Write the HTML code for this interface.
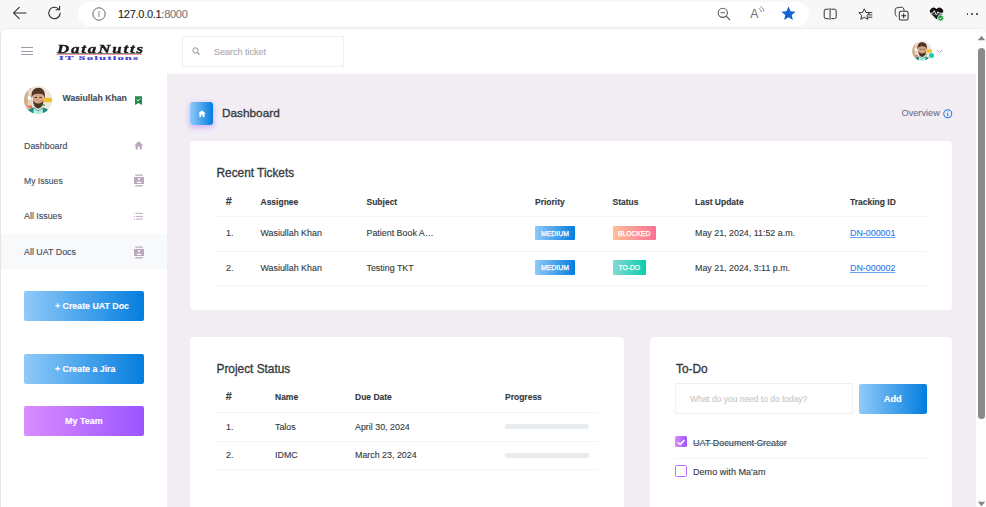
<!DOCTYPE html>
<html><head><meta charset="utf-8"><title>Dashboard</title>
<style>
html,body{margin:0;padding:0;width:986px;height:507px;overflow:hidden;background:#f7f7f7;font-family:"Liberation Sans",sans-serif;}
.t{position:absolute;white-space:nowrap;-webkit-text-stroke:0.12px currentColor;}
.b{position:absolute;}
svg.b{overflow:visible;}
</style></head><body>
<div class="b" style="left:0px;top:0px;width:986px;height:29px;background:#f7f7f7;"></div>
<div class="b" style="left:77.5px;top:2px;width:731px;height:24px;background:#fff;border-radius:12px;"></div>
<svg class="b" style="left:11px;top:5.2px" width="18" height="16" viewBox="0 0 18 16"><path d="M2.5 8H15M2.5 8L8.2 2.3M2.5 8L8.2 13.7" stroke="#262626" stroke-width="1.05" fill="none" stroke-linecap="round" stroke-linejoin="round"/></svg>
<svg class="b" style="left:46.3px;top:4.4px" width="18" height="18" viewBox="0 0 18 18"><path d="M14.2 9a5.7 5.7 0 1 1-1.8-4.2" stroke="#262626" stroke-width="1.05" fill="none" stroke-linecap="round"/><path d="M13.6 2.2v3.6h-3.6" stroke="#262626" stroke-width="1.05" fill="none" stroke-linecap="round" stroke-linejoin="round"/></svg>
<svg class="b" style="left:91.5px;top:6.5px" width="14" height="14" viewBox="0 0 14 14"><circle cx="7" cy="7" r="6.2" stroke="#555" stroke-width="0.9" fill="none"/><path d="M7 4v6" stroke="#666" stroke-width="0.8"/></svg>
<div class="t" style="left:118px;top:5.8px;font-size:11px;line-height:16px;color:#1f1f1f;letter-spacing:-0.28px;">127.0.0.1<span style="color:#777">:8000</span></div>
<svg class="b" style="left:716px;top:6px" width="16" height="16" viewBox="0 0 16 16"><circle cx="6.8" cy="6.8" r="4.6" stroke="#5a5a5a" stroke-width="1.1" fill="none"/><path d="M10.2 10.2L14 14M4.6 6.8h4.4" stroke="#5a5a5a" stroke-width="1.1"/></svg>
<div class="t" style="left:750.3px;top:5.6px;font-size:12.3px;line-height:16px;color:#707070;font-weight:normal;-webkit-text-stroke:0">A</div>
<svg class="b" style="left:757.5px;top:6.3px" width="7" height="7" viewBox="0 0 7 7"><path d="M0.8 2.6c1.5 0.6 2.4 1.8 2.6 3.4M2.4 0.6c2 0.8 3.3 2.5 3.5 4.8" stroke="#707070" stroke-width="0.85" fill="none"/></svg>
<svg class="b" style="left:780px;top:5px" width="17" height="17" viewBox="0 0 24 24"><path d="M12 2.2l2.9 6.6 7.1.6-5.4 4.7 1.6 7-6.2-3.7-6.2 3.7 1.6-7L2 9.4l7.1-.6z" fill="#1066d6"/></svg>
<svg class="b" style="left:823px;top:8px" width="15" height="12" viewBox="0 0 15 12"><path d="M5.8 1.2H3A1.8 1.8 0 0 0 1.2 3v5.8A1.8 1.8 0 0 0 3 10.6h2.8M8.4 1.2h3A1.8 1.8 0 0 1 13.2 3v5.8a1.8 1.8 0 0 1-1.8 1.8h-3" stroke="#333" stroke-width="1" fill="none"/><path d="M7.1 0v12" stroke="#333" stroke-width="1"/></svg>
<svg class="b" style="left:858px;top:7.5px" width="15" height="13" viewBox="0 0 15 13"><path d="M6.3 0.8l1.6 3.6 3.9.4-2.9 2.6.9 3.9-3.5-2-3.5 2 .9-3.9L0.8 4.8l3.9-.4z" stroke="#333" stroke-width="1" fill="#f7f7f7" stroke-linejoin="round"/><path d="M9.5 4.6h4.8M10 6.9h4.3M10 9.2h4.3" stroke="#333" stroke-width="0.95"/></svg>
<svg class="b" style="left:894px;top:6px" width="15" height="15" viewBox="0 0 15 15"><path d="M2.8 10.4C1.6 9.8 1.2 8.8 1.2 7.6V4.2C1.2 2.3 2.3 1.6 3.8 1.7L7.2 1.2C8.8 1 9.8 1.8 10.2 4.8" stroke="#333" stroke-width="0.95" fill="none"/><rect x="5.3" y="5.3" width="8.8" height="8.7" rx="1.6" stroke="#333" stroke-width="1.05" fill="#f7f7f7"/><path d="M9.7 7.3v4.9M7.25 9.75h4.9" stroke="#222" stroke-width="1"/></svg>
<svg class="b" style="left:929px;top:6px" width="16" height="16" viewBox="0 0 16 16"><path d="M7.5 13.2L1.8 7.6A3.3 3.3 0 0 1 7.5 3a3.3 3.3 0 0 1 5.8 4.6z" fill="#111"/><path d="M1.2 7.2h2.6l1.5-2.6 2 4.6 1.6-3.4 1.2 1.4h4.4" stroke="#fff" stroke-width="0.9" fill="none"/><path d="M1.5 8.6h12" stroke="#888" stroke-width="0.6"/><circle cx="11.6" cy="12" r="3" fill="#1f9a3e" stroke="#f7f7f7" stroke-width="0.7"/><path d="M10.3 12l0.9 0.9 1.6-1.7" stroke="#fff" stroke-width="0.8" fill="none"/></svg>
<div class="b" style="left:966.5px;top:12.9px;width:1.9px;height:1.9px;background:#333;border-radius:50%;"></div>
<div class="b" style="left:971.1px;top:12.9px;width:1.9px;height:1.9px;background:#333;border-radius:50%;"></div>
<div class="b" style="left:975.7px;top:12.9px;width:1.9px;height:1.9px;background:#333;border-radius:50%;"></div>
<div class="b" style="left:0px;top:28px;width:986px;height:479px;box-sizing:border-box;background:#fff;border-top:1px solid #ececec;border-left:1px solid #e6e6e6;border-top-left-radius:7px;border-top-right-radius:7px;"></div>
<div class="b" style="left:21px;top:47.4px;width:12px;height:1.1px;background:#9a9daa;"></div>
<div class="b" style="left:21px;top:50.8px;width:12px;height:1.1px;background:#9a9daa;"></div>
<div class="b" style="left:21px;top:54.0px;width:12px;height:1.1px;background:#9a9daa;"></div>
<div class='t' style="left:57px;top:44px;font-family:'Liberation Serif',serif;font-style:italic;font-weight:bold;font-size:11.5px;line-height:11.5px;color:#1a1a1a;transform:scaleX(1.47);transform-origin:0 0;letter-spacing:1.25px;-webkit-text-stroke:0.35px #1a1a1a">DataNutts</div>
<div class="b" style="left:56px;top:54.2px;width:86px;height:1.1px;background:#f29a9a;"></div>
<div class="b" style="left:58px;top:53px;width:83px;height:0.8px;background:rgba(40,40,40,0.55);"></div>
<div class='t' style="left:59px;top:55.4px;font-family:'Liberation Serif',serif;font-weight:bold;font-size:7.6px;line-height:7.6px;color:#4048d4;transform:scale(1.61,0.86);transform-origin:0 0;letter-spacing:0.85px;-webkit-text-stroke:0.25px #4048d4">IT Solutions</div>
<div class="b" style="left:182px;top:36px;width:161.5px;height:30.5px;box-sizing:border-box;border:1px solid #f0f0f4;background:#fff;"></div>
<svg class="b" style="left:192px;top:47px" width="9" height="9" viewBox="0 0 9 9"><circle cx="3.5" cy="3.5" r="2.7" stroke="#8f919c" stroke-width="1" fill="none"/><path d="M5.4 5.4L7.6 7.6" stroke="#8f919c" stroke-width="1.2"/></svg>
<div class="t" style="left:214px;top:47.68px;font-size:9px;line-height:9px;color:#a9aab4;font-weight:normal;">Search ticket</div>
<div class="b" style="left:912px;top:41px;width:20px;height:20px"><svg viewBox="0 0 28 28" width="20" height="20"><defs><clipPath id="cb"><circle cx="14" cy="14" r="14"/></clipPath><filter id="fb" x="-10%" y="-10%" width="120%" height="120%"><feGaussianBlur stdDeviation="0.5"/></filter></defs><g clip-path="url(#cb)"><g filter="url(#fb)"><rect width="28" height="28" fill="#efe6dc"/><rect x="-1" y="0" width="8" height="28" fill="#d2ad8c"/><rect x="4" y="3" width="4" height="20" fill="#e8d6c2"/><circle cx="5.3" cy="12" r="1.9" fill="#fbfbfb"/><rect x="20" y="11.8" width="8" height="4.4" fill="#f0bf2a"/><rect x="18" y="17.8" width="2.8" height="2.2" fill="#78b86a"/><rect x="4.3" y="19.5" width="3.8" height="2.5" fill="#e6735a"/><path d="M7.6 12C7 5.5 9.5 1.8 14.2 1.8S21.6 5 21 12.5L19.6 9.6C17.8 7.6 11 7.6 9 9.6z" fill="#553626"/><path d="M8.8 9.4C11 7.3 17.6 7.3 19.6 9.4L19.4 14.6C18.8 19 16.8 21.2 14.2 21.2S9.6 19 9 14.6z" fill="#d6a486"/><path d="M8.9 13.8C9.2 19.8 11.6 22.4 14.2 22.4S19.2 19.8 19.5 13.8C18.6 16.6 17 17.4 14.2 17.4S9.8 16.6 8.9 13.8z" fill="#4e3326"/><rect x="10.6" y="11" width="2.4" height="1" fill="#4a3024"/><rect x="15.4" y="11" width="2.4" height="1" fill="#4a3024"/><path d="M1.5 29C2.5 24 6 22.3 10 21.6L14.2 24.6L18.4 21.6C22.4 22.3 25.6 24 26.6 29z" fill="#228a7a"/><path d="M9.8 22L14.2 25.2L18.6 22L19.2 29H9.2z" fill="#b4ece0"/></g></g></svg></div>
<div class="b" style="left:929px;top:52.5px;width:5px;height:5px;background:#1bcfb4;border-radius:50%;"></div>
<svg class="b" style="left:936px;top:49px" width="7" height="5" viewBox="0 0 7 5"><path d="M1 1l2.5 2.5L6 1" stroke="#c193f7" stroke-width="1" fill="none"/></svg>
<div class="b" style="left:167px;top:74px;width:809px;height:433px;background:#f2edf3;"></div>
<div class="b" style="left:167px;top:73px;width:809px;height:1px;background:#f9f7fa;"></div>
<div class="b" style="left:24px;top:86px;width:28px;height:28px"><svg viewBox="0 0 28 28" width="28" height="28"><defs><clipPath id="ca"><circle cx="14" cy="14" r="14"/></clipPath><filter id="fa" x="-10%" y="-10%" width="120%" height="120%"><feGaussianBlur stdDeviation="0.5"/></filter></defs><g clip-path="url(#ca)"><g filter="url(#fa)"><rect width="28" height="28" fill="#efe6dc"/><rect x="-1" y="0" width="8" height="28" fill="#d2ad8c"/><rect x="4" y="3" width="4" height="20" fill="#e8d6c2"/><circle cx="5.3" cy="12" r="1.9" fill="#fbfbfb"/><rect x="20" y="11.8" width="8" height="4.4" fill="#f0bf2a"/><rect x="18" y="17.8" width="2.8" height="2.2" fill="#78b86a"/><rect x="4.3" y="19.5" width="3.8" height="2.5" fill="#e6735a"/><path d="M7.6 12C7 5.5 9.5 1.8 14.2 1.8S21.6 5 21 12.5L19.6 9.6C17.8 7.6 11 7.6 9 9.6z" fill="#553626"/><path d="M8.8 9.4C11 7.3 17.6 7.3 19.6 9.4L19.4 14.6C18.8 19 16.8 21.2 14.2 21.2S9.6 19 9 14.6z" fill="#d6a486"/><path d="M8.9 13.8C9.2 19.8 11.6 22.4 14.2 22.4S19.2 19.8 19.5 13.8C18.6 16.6 17 17.4 14.2 17.4S9.8 16.6 8.9 13.8z" fill="#4e3326"/><rect x="10.6" y="11" width="2.4" height="1" fill="#4a3024"/><rect x="15.4" y="11" width="2.4" height="1" fill="#4a3024"/><path d="M1.5 29C2.5 24 6 22.3 10 21.6L14.2 24.6L18.4 21.6C22.4 22.3 25.6 24 26.6 29z" fill="#228a7a"/><path d="M9.8 22L14.2 25.2L18.6 22L19.2 29H9.2z" fill="#b4ece0"/></g></g></svg></div>
<div class="t" style="left:62.5px;top:93.64px;font-size:8.7px;line-height:8.7px;color:#3e4b5b;font-weight:bold;">Wasiullah Khan</div>
<svg class="b" style="left:135px;top:95.8px" width="7" height="9.2" viewBox="0 0 8 10"><path d="M0 0h8v10L4 7.8 0 10z" fill="#228b50"/><path d="M1.8 3.8l1.6 1.5 2.8-2.8" stroke="#e8f5ec" stroke-width="1.1" fill="none"/></svg>
<div class="b" style="left:1px;top:234px;width:166px;height:35px;background:#f8f9fb;"></div>
<div class="t" style="left:24px;top:142.07px;font-size:8.9px;line-height:8.9px;color:#3e4b5b;font-weight:normal;">Dashboard</div>
<div class="t" style="left:24px;top:176.72px;font-size:8.6px;line-height:8.6px;color:#3e4b5b;font-weight:normal;">My Issues</div>
<div class="t" style="left:24px;top:211.97px;font-size:8.9px;line-height:8.9px;color:#3e4b5b;font-weight:normal;">All Issues</div>
<div class="t" style="left:24px;top:247.97px;font-size:8.9px;line-height:8.9px;color:#3e4b5b;font-weight:normal;">All UAT Docs</div>
<svg class="b" style="left:133.6px;top:140.6px" width="9.5" height="8.5" viewBox="0 0 10 9"><path d="M5 0.3L0.3 4.6h1.4V9h2.2V6h2.2V9h2.2V4.6h1.4z" fill="#bba8bf"/></svg>
<svg class="b" style="left:134px;top:174px" width="10" height="13" viewBox="0 0 10 13"><rect x="0" y="3" width="10" height="7" rx="0.5" fill="#bba8bf"/><rect x="1.2" y="0.5" width="7.6" height="1.2" fill="#bba8bf"/><rect x="1.2" y="11.2" width="7.6" height="1.3" fill="#bba8bf"/><circle cx="5" cy="5" r="1.05" fill="#fff"/><path d="M2.4 9c0.4-1.1 1.4-1.6 2.6-1.6s2.2 0.5 2.6 1.6z" fill="#fff"/></svg>
<svg class="b" style="left:134px;top:245.5px" width="10" height="13" viewBox="0 0 10 13"><rect x="0" y="3" width="10" height="7" rx="0.5" fill="#bba8bf"/><rect x="1.2" y="0.5" width="7.6" height="1.2" fill="#bba8bf"/><rect x="1.2" y="11.2" width="7.6" height="1.3" fill="#bba8bf"/><circle cx="5" cy="5" r="1.05" fill="#fff"/><path d="M2.4 9c0.4-1.1 1.4-1.6 2.6-1.6s2.2 0.5 2.6 1.6z" fill="#fff"/></svg>
<svg class="b" style="left:134px;top:212px" width="10" height="9" viewBox="0 0 10 9"><g fill="#bba8bf"><rect x="0" y="0.85" width="1.1" height="1"/><rect x="2" y="0.85" width="7" height="1"/><rect x="0" y="3.9" width="1.1" height="1"/><rect x="2" y="3.9" width="7" height="1"/><rect x="0" y="6.5" width="1.1" height="1"/><rect x="2" y="6.5" width="7" height="1"/></g></svg>
<div class="b" style="left:24px;top:291px;width:120px;height:29.6px;background:linear-gradient(to right,#90caf9,#047edf 99%);border-radius:2px;"></div>
<div class="t" style="left:55px;top:301.85px;font-size:8.8px;line-height:8.8px;color:#fff;font-weight:bold;">+ Create UAT Doc</div>
<div class="b" style="left:24px;top:354px;width:120px;height:29.6px;background:linear-gradient(to right,#90caf9,#047edf 99%);border-radius:2px;"></div>
<div class="t" style="left:55px;top:364.85px;font-size:8.8px;line-height:8.8px;color:#fff;font-weight:bold;">+ Create a Jira</div>
<div class="b" style="left:24px;top:406.3px;width:120px;height:29.6px;background:linear-gradient(to right,#da8cff,#9a55ff);border-radius:2px;"></div>
<div class="t" style="left:65px;top:416.88px;font-size:9px;line-height:9px;color:#fff;font-weight:bold;">My Team</div>
<div class="b" style="left:190px;top:102px;width:23px;height:23px;background:linear-gradient(to right,#90caf9,#047edf 99%);border-radius:3px;box-shadow:0 2px 5px 0.5px rgba(163,93,255,0.35);"></div>
<svg class="b" style="left:197.5px;top:109.5px" width="8" height="7" viewBox="0 0 10 9"><path d="M5 0.3L0.3 4.6h1.4V9h2.4V6.2h1.8V9h2.4V4.6h1.4z" fill="#fff"/></svg>
<div class="t" style="left:222px;top:107.61px;font-size:11.8px;line-height:11.8px;color:#343a40;font-weight:normal;-webkit-text-stroke:0.32px #343a40;">Dashboard</div>
<div class="t" style="left:901.5px;top:109.01px;font-size:9.2px;line-height:9.2px;color:#6c7293;font-weight:normal;">Overview</div>
<svg class="b" style="left:942.5px;top:108.5px" width="9.5" height="9.5" viewBox="0 0 10 10"><circle cx="5" cy="5" r="4.2" stroke="#1f7aea" stroke-width="1.1" fill="none"/><path d="M5 4.3v3.2" stroke="#1f7aea" stroke-width="1.1"/><circle cx="5" cy="2.9" r="0.6" fill="#1f7aea"/></svg>
<div class="b" style="left:190px;top:141px;width:762px;height:169px;background:#fff;border-radius:4px;"></div>
<div class="t" style="left:216.5px;top:167.57px;font-size:11.85px;line-height:11.85px;color:#343a40;font-weight:normal;-webkit-text-stroke:0.32px #343a40;">Recent Tickets</div>
<div class="t" style="left:225.8px;top:195.66px;font-size:10.8px;line-height:10.8px;color:#343a40;font-weight:bold;">#</div>
<div class="t" style="left:260.5px;top:197.60px;font-size:8.5px;line-height:8.5px;color:#343a40;font-weight:bold;">Assignee</div>
<div class="t" style="left:366.5px;top:197.60px;font-size:8.5px;line-height:8.5px;color:#343a40;font-weight:bold;">Subject</div>
<div class="t" style="left:535px;top:197.60px;font-size:8.5px;line-height:8.5px;color:#343a40;font-weight:bold;">Priority</div>
<div class="t" style="left:612.5px;top:197.60px;font-size:8.5px;line-height:8.5px;color:#343a40;font-weight:bold;">Status</div>
<div class="t" style="left:695px;top:197.60px;font-size:8.5px;line-height:8.5px;color:#343a40;font-weight:bold;">Last Update</div>
<div class="t" style="left:850px;top:197.60px;font-size:8.5px;line-height:8.5px;color:#343a40;font-weight:bold;">Tracking ID</div>
<div class="b" style="left:216px;top:216px;width:711px;height:1px;background:#f3f4f7;"></div>
<div class="b" style="left:216px;top:250.5px;width:711px;height:1px;background:#f3f4f7;"></div>
<div class="b" style="left:216px;top:285px;width:711px;height:1px;background:#f3f4f7;"></div>
<div class="t" style="left:226px;top:228.77px;font-size:8.9px;line-height:8.9px;color:#343a40;font-weight:normal;">1.</div>
<div class="t" style="left:260.5px;top:228.77px;font-size:8.9px;line-height:8.9px;color:#343a40;font-weight:normal;">Wasiullah Khan</div>
<div class="t" style="left:366.5px;top:228.77px;font-size:8.9px;line-height:8.9px;color:#343a40;font-weight:normal;">Patient Book A…</div>
<div class="b" style="left:535px;top:226px;width:40px;height:14px;background:linear-gradient(to right,#90caf9,#047edf 99%);border-radius:1px;"></div>
<div class="t" style="left:535px;top:230.66px;font-size:6.9px;line-height:6.9px;color:#fff;font-weight:normal;width:40px;text-align:center;-webkit-text-stroke:0.25px #fff;">MEDIUM</div>
<div class="b" style="left:612.5px;top:226px;width:43.5px;height:14px;background:linear-gradient(to right,#ffbf96,#fe7096);border-radius:1px;"></div>
<div class="t" style="left:612.5px;top:230.79px;font-size:6.75px;line-height:6.75px;color:#fff;font-weight:normal;width:43.5px;text-align:center;-webkit-text-stroke:0.25px #fff;">BLOCKED</div>
<div class="t" style="left:695px;top:228.77px;font-size:8.9px;line-height:8.9px;color:#343a40;font-weight:normal;">May 21, 2024, 11:52 a.m.</div>
<div class="t" style="left:850px;top:228.77px;font-size:8.9px;line-height:8.9px;color:#2f7bf0;font-weight:normal;text-decoration:underline;text-decoration-thickness:0.7px;text-decoration-color:#6aa0f5;text-underline-offset:1px;">DN-000001</div>
<div class="t" style="left:226px;top:263.67px;font-size:8.9px;line-height:8.9px;color:#343a40;font-weight:normal;">2.</div>
<div class="t" style="left:260.5px;top:263.67px;font-size:8.9px;line-height:8.9px;color:#343a40;font-weight:normal;">Wasiullah Khan</div>
<div class="t" style="left:366.5px;top:263.67px;font-size:8.9px;line-height:8.9px;color:#343a40;font-weight:normal;">Testing TKT</div>
<div class="b" style="left:535px;top:260px;width:40px;height:15px;background:linear-gradient(to right,#90caf9,#047edf 99%);border-radius:1px;"></div>
<div class="t" style="left:535px;top:265.26px;font-size:6.9px;line-height:6.9px;color:#fff;font-weight:normal;width:40px;text-align:center;-webkit-text-stroke:0.25px #fff;">MEDIUM</div>
<div class="b" style="left:612.5px;top:260px;width:33.5px;height:15px;background:linear-gradient(to right,#84d9d2,#07cdae);border-radius:1px;"></div>
<div class="t" style="left:612.5px;top:265.39px;font-size:6.75px;line-height:6.75px;color:#fff;font-weight:normal;width:33.5px;text-align:center;-webkit-text-stroke:0.25px #fff;">TO-DO</div>
<div class="t" style="left:695px;top:263.67px;font-size:8.9px;line-height:8.9px;color:#343a40;font-weight:normal;">May 21, 2024, 3:11 p.m.</div>
<div class="t" style="left:850px;top:263.67px;font-size:8.9px;line-height:8.9px;color:#2f7bf0;font-weight:normal;text-decoration:underline;text-decoration-thickness:0.7px;text-decoration-color:#6aa0f5;text-underline-offset:1px;">DN-000002</div>
<div class="b" style="left:190px;top:337px;width:434px;height:180px;background:#fff;border-radius:4px;"></div>
<div class="t" style="left:216.5px;top:363.57px;font-size:11.85px;line-height:11.85px;color:#343a40;font-weight:normal;-webkit-text-stroke:0.32px #343a40;">Project Status</div>
<div class="t" style="left:225.8px;top:391.46px;font-size:10.8px;line-height:10.8px;color:#343a40;font-weight:bold;">#</div>
<div class="t" style="left:275px;top:393.40px;font-size:8.5px;line-height:8.5px;color:#343a40;font-weight:bold;">Name</div>
<div class="t" style="left:355px;top:393.40px;font-size:8.5px;line-height:8.5px;color:#343a40;font-weight:bold;">Due Date</div>
<div class="t" style="left:505px;top:393.40px;font-size:8.5px;line-height:8.5px;color:#343a40;font-weight:bold;">Progress</div>
<div class="b" style="left:216px;top:412px;width:382px;height:1px;background:#f3f4f7;"></div>
<div class="b" style="left:216px;top:440.5px;width:382px;height:1px;background:#f3f4f7;"></div>
<div class="b" style="left:216px;top:469px;width:382px;height:1px;background:#f3f4f7;"></div>
<div class="t" style="left:226px;top:422.67px;font-size:8.9px;line-height:8.9px;color:#343a40;font-weight:normal;">1.</div>
<div class="t" style="left:275px;top:422.67px;font-size:8.9px;line-height:8.9px;color:#343a40;font-weight:normal;">Talos</div>
<div class="t" style="left:355px;top:422.67px;font-size:8.9px;line-height:8.9px;color:#343a40;font-weight:normal;">April 30, 2024</div>
<div class="b" style="left:505px;top:424px;width:84px;height:5px;background:#e9ecef;border-radius:3px;"></div>
<div class="t" style="left:226px;top:451.27px;font-size:8.9px;line-height:8.9px;color:#343a40;font-weight:normal;">2.</div>
<div class="t" style="left:275px;top:451.27px;font-size:8.9px;line-height:8.9px;color:#343a40;font-weight:normal;">IDMC</div>
<div class="t" style="left:355px;top:451.27px;font-size:8.9px;line-height:8.9px;color:#343a40;font-weight:normal;">March 23, 2024</div>
<div class="b" style="left:505px;top:452.8px;width:84px;height:5px;background:#e9ecef;border-radius:3px;"></div>
<div class="b" style="left:650px;top:337px;width:302px;height:180px;background:#fff;border-radius:4px;"></div>
<div class="t" style="left:676px;top:363.57px;font-size:11.85px;line-height:11.85px;color:#343a40;font-weight:normal;-webkit-text-stroke:0.32px #343a40;">To-Do</div>
<div class="b" style="left:675px;top:383px;width:178px;height:31px;box-sizing:border-box;border:1px solid #f0f0f3;"></div>
<div class="t" style="left:690px;top:394.85px;font-size:8.45px;line-height:8.45px;color:#c9c8c8;font-weight:normal;">What do you need to do today?</div>
<div class="b" style="left:858.5px;top:383.5px;width:68.5px;height:30px;background:linear-gradient(to right,#90caf9,#047edf 99%);border-radius:2px;"></div>
<div class="t" style="left:858.5px;top:394.93px;font-size:9.3px;line-height:9.3px;color:#fff;font-weight:bold;width:68.5px;text-align:center;">Add</div>
<div class="b" style="left:675px;top:436px;width:12px;height:11.3px;background:linear-gradient(to right,#da8cff,#9a55ff);border-radius:1.5px;"></div>
<svg class="b" style="left:676px;top:436.5px" width="10" height="10" viewBox="0 0 10 10"><path d="M1.8 5.3l2.3 2.2 4.4-4.6" stroke="#fff" stroke-width="1.5" fill="none"/></svg>
<div class="t" style="left:693px;top:439.14px;font-size:9.05px;line-height:9.05px;color:#343a40;font-weight:normal;text-decoration:line-through;text-decoration-color:#7d97b5;text-decoration-thickness:0.7px;">UAT Document Creator</div>
<div class="b" style="left:675px;top:458px;width:252px;height:1px;background:#f3f4f7;"></div>
<div class="b" style="left:675px;top:465px;width:12px;height:11.8px;box-sizing:border-box;border:1.3px solid #b66dff;border-radius:1.5px;"></div>
<div class="t" style="left:693px;top:467.60px;font-size:9.1px;line-height:9.1px;color:#343a40;font-weight:normal;">Demo with Ma&#39;am</div>
<div class="b" style="left:976px;top:29px;width:10px;height:478px;background:#fdfdfd;border-top-right-radius:6px;"></div>
<div class="b" style="left:978px;top:47.5px;width:7px;height:371px;background:#8a8a8a;border-radius:4px;"></div>
<svg class="b" style="left:977px;top:35px" width="9" height="6" viewBox="0 0 9 6"><path d="M4.5 0.8L8.2 5.2H0.8z" fill="#858585"/></svg>
<svg class="b" style="left:977px;top:500.5px" width="9" height="6" viewBox="0 0 9 6"><path d="M4.5 5.2L8.2 0.8H0.8z" fill="#858585"/></svg>
</body></html>
